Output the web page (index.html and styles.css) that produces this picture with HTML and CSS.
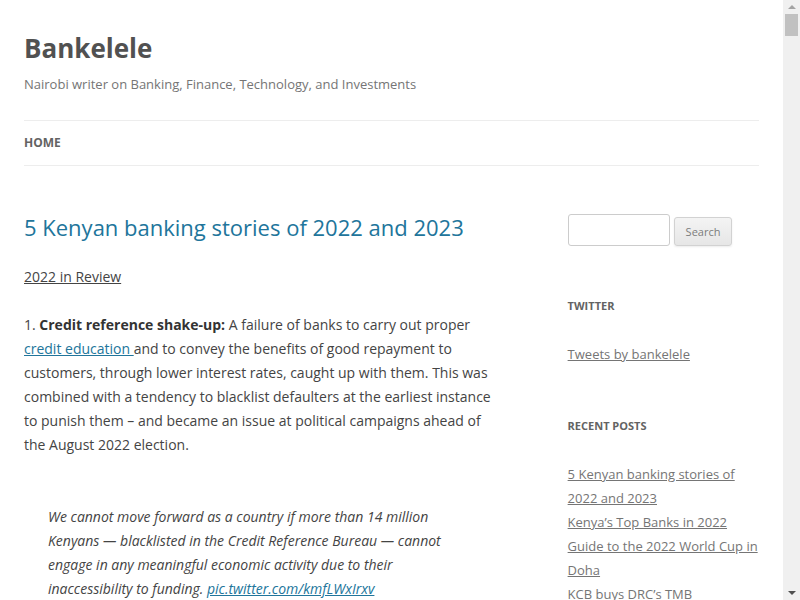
FILE: index.html
```html
<!DOCTYPE html>
<html>
<head>
    <title>Bankelele</title>
    <link rel="stylesheet" href="styles.css">
</head>
<body>
    <div class="page">
        <header class="site-header">
            <h1 class="site-title">Bankelele</h1>
            <h2 class="site-description">Nairobi writer on Banking, Finance, Technology, and Investments</h2>
            <nav class="main-navigation">
                <a class="current" href="#">Home</a>
            </nav>
        </header>

        <div class="site-main">
            <main class="site-content">
                <article>
                    <h1 class="entry-title"><a href="#">5 Kenyan banking stories of 2022 and 2023</a></h1>
                    <div class="entry-content">
                        <p><a class="plain-link" href="#">2022 in Review </a></p>
                        <p>1. <strong>Credit reference shake-up:</strong> A failure of banks to carry out proper <a href="#">credit education </a>and to convey the benefits of good repayment to customers, through lower interest rates, caught up with them. This was combined with a tendency to blacklist defaulters at the earliest instance to punish them – and became an issue at political campaigns ahead of the August 2022 election.</p>
                        <blockquote>
                            <p>We cannot move forward as a country if more than 14 million Kenyans — blacklisted in the Credit Reference Bureau — cannot engage in any meaningful economic activity due to their inaccessibility to funding. <a href="#">pic.twitter.com/kmfLWxIrxv</a></p>
                        </blockquote>
                    </div>
                </article>
            </main>

            <aside class="sidebar">
                <div class="widget">
                    <form class="search-form">
                        <input type="text">
                        <button type="button">Search</button>
                    </form>
                </div>
                <div class="widget">
                    <h3 class="widget-title">Twitter</h3>
                    <p><a href="#">Tweets by bankelele</a></p>
                </div>
                <div class="widget">
                    <h3 class="widget-title">Recent Posts</h3>
                    <ul>
                        <li><a href="#">5 Kenyan banking stories of 2022 and 2023</a></li>
                        <li><a href="#">Kenya’s Top Banks in 2022</a></li>
                        <li><a href="#">Guide to the 2022 World Cup in Doha</a></li>
                        <li><a href="#">KCB buys DRC’s TMB</a></li>
                        <li><a href="#">Safaricom results 2022</a></li>
                    </ul>
                </div>
            </aside>
        </div>
    </div>

    <div class="scrollbar">
        <div class="arrow up"></div>
        <div class="thumb"></div>
        <div class="track"></div>
        <div class="arrow down"></div>
    </div>
</body>
</html>
```

FILE: styles.css
```css
:root {
    --text-color: #444444;
    --link-color: #21759b;
    --muted: #757575;
    --rule: #ededed;
}

html, body {
    height: 100%;
}

body {
    margin: 0;
    display: flex;
    overflow: hidden;
    font-family: "Open Sans", "DejaVu Sans", sans-serif;
    font-size: 14px;
    line-height: 24px;
    color: var(--text-color);
    background: #ffffff;
}

.page {
    flex: 1;
    min-width: 0;
    padding: 0 24px;
}

a {
    color: var(--link-color);
}

/* Header */
.site-header {
    padding-top: 24px;
}

.site-title {
    margin: 0;
    font-size: 26px;
    line-height: 48px;
    font-weight: bold;
    color: #515151;
}

.site-description {
    margin: 0;
    font-size: 13px;
    line-height: 24px;
    font-weight: normal;
    color: var(--muted);
}

.main-navigation {
    margin-top: 24px;
    border-top: 1px solid var(--rule);
    border-bottom: 1px solid var(--rule);
}

.main-navigation a {
    display: inline-block;
    font-size: 12px;
    line-height: 44px;
    text-transform: uppercase;
    text-decoration: none;
    color: #6a6a6a;
}

.main-navigation a.current {
    color: #636363;
    font-weight: bold;
}

/* Layout */
.site-main {
    display: flex;
    justify-content: space-between;
    margin-top: 48px;
}

.site-content {
    width: 65.1%;
}

.sidebar {
    width: 26.04%;
}

/* Article */
.entry-title {
    margin: 0 0 25px;
    font-size: 22px;
    line-height: 26px;
    font-weight: normal;
}

.entry-title a {
    text-decoration: none;
}

.entry-content p {
    margin: 0 0 24px;
}

.entry-content strong {
    color: #333333;
}

.entry-content .plain-link {
    color: var(--text-color);
}

blockquote {
    margin: 0 0 24px;
    padding: 24px;
    font-style: italic;
}

blockquote p {
    margin: 0;
}

/* Sidebar */
.widget {
    margin-bottom: 48px;
    font-size: 13px;
    line-height: 24px;
}

.widget a {
    color: var(--muted);
}

.widget p {
    margin: 0;
}

.widget ul {
    list-style: none;
    margin: 0;
    padding: 0;
}

.widget-title {
    margin: 0 0 24px;
    font-size: 11px;
    line-height: 24px;
    font-weight: bold;
    text-transform: uppercase;
    color: #636363;
}

.search-form {
    display: flex;
    align-items: flex-end;
    gap: 4px;
}

.search-form input {
    width: 88px;
    height: 18px;
    padding: 6px;
    border: 1px solid #cccccc;
    border-radius: 3px;
    font-family: inherit;
    font-size: 12px;
}

.search-form button {
    font-family: inherit;
    font-size: 11px;
    line-height: 15px;
    padding: 6px 11px;
    color: #7c7c7c;
    background: linear-gradient(to bottom, #f4f4f4, #e6e6e6);
    border: 1px solid #d2d2d2;
    border-radius: 3px;
    box-shadow: 0 1px 2px rgba(64, 64, 64, 0.1);
}

/* Scrollbar */
.scrollbar {
    width: 17px;
    height: 100%;
    flex-shrink: 0;
    display: flex;
    flex-direction: column;
    align-items: center;
    background: #f0f0f0;
}

.arrow {
    height: 14px;
    width: 100%;
    display: flex;
    align-items: center;
    justify-content: center;
}

.arrow::before {
    content: "";
    border-left: 4px solid transparent;
    border-right: 4px solid transparent;
}

.arrow.up::before {
    border-bottom: 4px solid #a3a3a3;
}

.arrow.down::before {
    border-top: 4px solid #505050;
}

.thumb {
    width: 13px;
    height: 22px;
    background: #c1c1c1;
}

.track {
    flex: 1;
}
```
